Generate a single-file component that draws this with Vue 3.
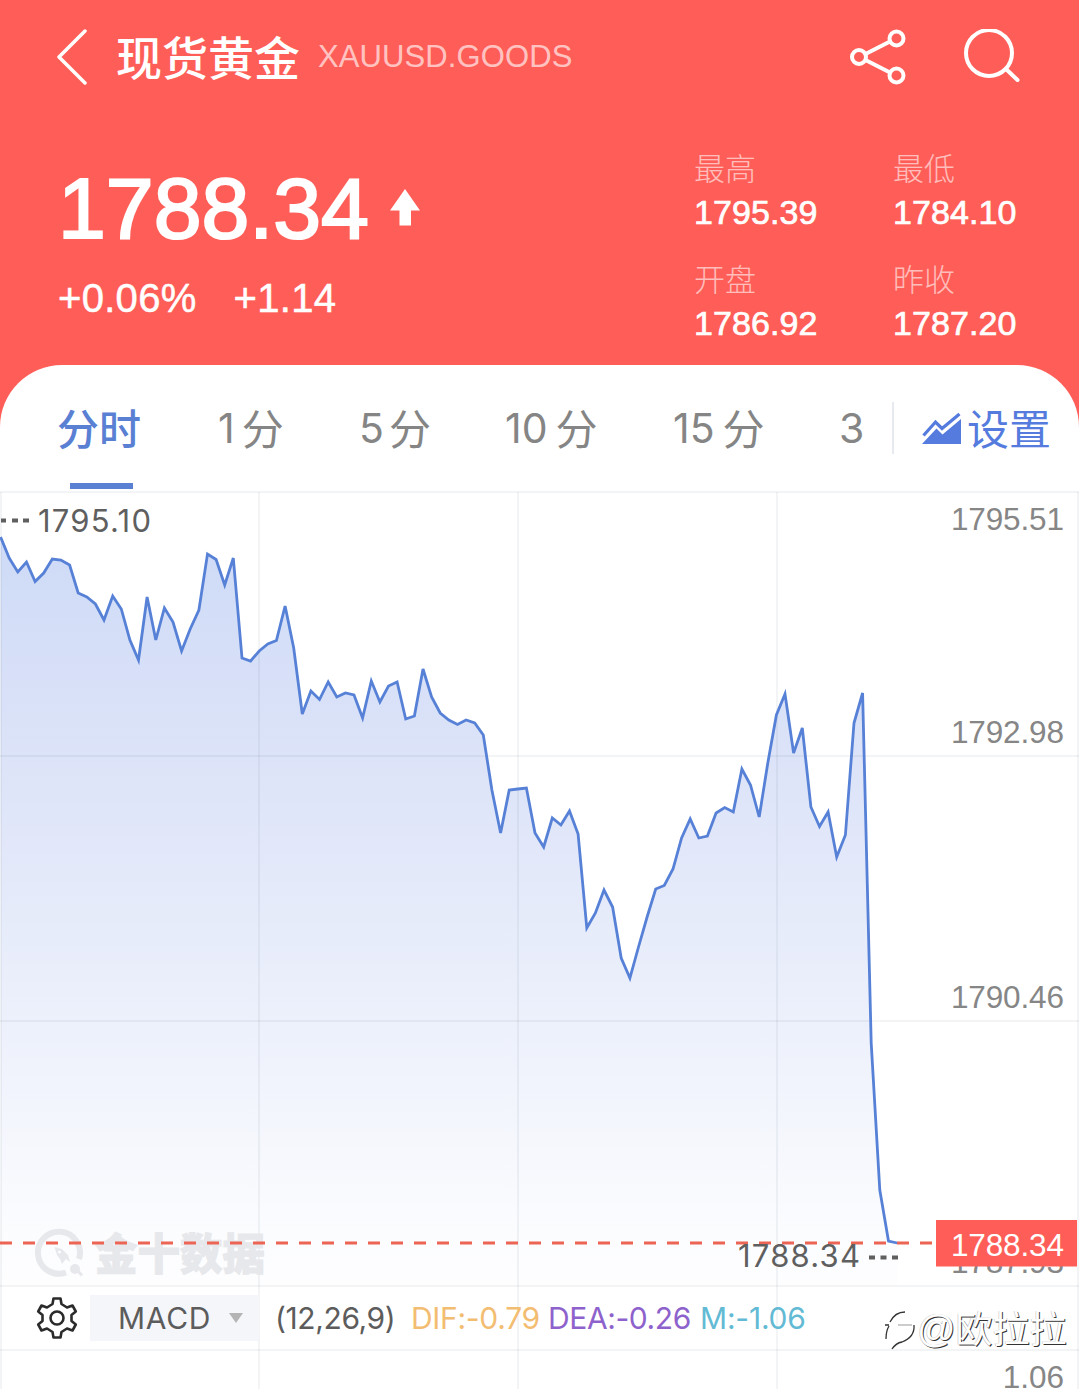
<script setup>
import { ref, computed } from 'vue';

const stats = [
  { label: '最高', value: '1795.39' },
  { label: '最低', value: '1784.10' },
  { label: '开盘', value: '1786.92' },
  { label: '昨收', value: '1787.20' },
];

const tabs = [
  { num: '', unit: '分时' },
  { num: '1', unit: '分' },
  { num: '5', unit: '分' },
  { num: '10', unit: '分' },
  { num: '15', unit: '分' },
  { num: '3', unit: '' },
];
const activeTab = ref(0);

// Y positions of the line inside the chart, one per minute
const serie = [
  46, 67, 81, 71, 90.5, 82, 68, 69, 74, 102, 106, 113, 129, 105, 118, 149, 169, 106, 149, 117,
  131, 160, 138, 119, 63, 68.5, 94, 67, 167, 170, 160, 153, 149.5, 115, 157, 223, 200, 208.5, 191, 206,
  202, 204, 227, 190, 211, 195, 191, 228, 225, 178, 206, 222, 229, 233.5, 229, 232, 244, 299, 342, 299,
  298, 297, 342, 356, 327, 334, 320, 343, 437, 422, 399, 416, 467, 487, 456, 426, 398, 394.5, 378, 347,
  328, 347, 345, 322, 316.5, 321, 278, 294, 326, 272, 224, 203, 262, 237, 316, 335.5, 321, 366, 344, 232,
  202, 552, 699, 750, 752,
];

const linePoints = computed(() =>
  serie.map((y, i) => `${(0.6 + i * 8.62).toFixed(1)},${y}`).join(' ')
);
const areaPoints = computed(() => `1,794 ${linePoints.value} 897.5,794`);

const axisLabels = [
  { y: 39, text: '1795.51', w: 113 },
  { y: 252, text: '1792.98', w: 113 },
  { y: 517, text: '1790.46', w: 113 },
  { y: 782, text: '1787.93', w: 113 },
];
</script>

<template>
  <main class="page">
    <header class="header">
      <div class="topbar">
        <svg class="back" width="30" height="56" viewBox="0 0 30 56">
          <path d="M28 2 L2 28 L28 54" />
        </svg>
        <h1>现货黄金</h1>
        <span class="code">XAUUSD.GOODS</span>
        <svg class="share" width="56" height="56" viewBox="0 0 56 56">
          <circle cx="9" cy="28" r="7" />
          <circle cx="46.500" cy="9.500" r="7" />
          <circle cx="46.500" cy="46.500" r="7" />
          <path d="M15.500 25 L40 12.500 M15.500 31 L40 43.500" />
        </svg>
        <svg class="search" width="58" height="56" viewBox="0 0 58 56">
          <circle cx="26" cy="24" r="23" />
          <path d="M43 40 L54.500 51" />
        </svg>
      </div>
      <div class="quote">
        <div class="price-box">
          <div class="price-row">
            <span class="price">1788.34</span>
            <svg width="30" height="38" viewBox="0 0 30 38">
              <path d="M15 0 L30 21.500 L21 21.500 L21 36.500 L9.500 36.500 L9.500 21.500 L0 21.500 Z" fill="#fff" />
            </svg>
          </div>
          <div class="change">
            <span>+0.06%</span>
            <span>+1.14</span>
          </div>
        </div>
        <div class="stats">
          <div v-for="s in stats" :key="s.label" class="stat">
            <span class="stat-label">{{ s.label }}</span>
            <span class="stat-value">{{ s.value }}</span>
          </div>
        </div>
      </div>
    </header>

    <section class="panel">
      <nav class="tabs">
        <button
          v-for="(t, i) in tabs"
          :key="i"
          class="tab"
          :class="['tab-' + i, { active: activeTab === i }]"
          @click="activeTab = i"
        >
          <span v-if="t.num" class="num">{{ t.num }}</span>
          <span v-if="t.unit" class="unit">{{ t.unit }}</span>
        </button>
        <span class="divider"></span>
        <button class="settings">
          <svg width="40" height="33" viewBox="0 0 40 33">
            <path d="M1.500 23.500 L13.500 10 L20 16.500 L37.500 2" fill="none" stroke="#547bdd" stroke-width="3.200" />
            <path d="M0 32 L14.500 16.500 L20.500 22.500 L39 7 L39 32 Z" fill="#547bdd" />
          </svg>
          <span class="unit">设置</span>
        </button>
      </nav>

      <div class="chart">
        <svg class="canvas" width="1079" height="898" viewBox="0 0 1079 898">
          <defs>
            <linearGradient id="fill" gradientUnits="userSpaceOnUse" x1="0" y1="46" x2="0" y2="794">
              <stop offset="0" stop-color="#4a78e0" stop-opacity="0.27" />
              <stop offset="0.32" stop-color="#4a6fdc" stop-opacity="0.185" />
              <stop offset="0.65" stop-color="#4a6fdc" stop-opacity="0.1" />
              <stop offset="0.93" stop-color="#4a6fdc" stop-opacity="0.02" />
              <stop offset="1" stop-color="#4a6fdc" stop-opacity="0.01" />
            </linearGradient>
          </defs>

          <polygon :points="areaPoints" fill="url(#fill)" />

          <g class="grid">
            <path d="M0 1 H1079 M0 265 H1079 M0 530 H1079 M0 795 H1079 M0 859 H1079" />
            <path d="M1 1 V898 M259 1 V898 M518 1 V898 M777 1 V898 M1078 1 V898" />
          </g>

          <g class="brand">
            <path d="M66 781.500 A21 21 0 1 1 79 768" fill="none" stroke-width="6" />
            <path d="M54.500 756 L62 758 L68 764 L70 771 L66 768 L62 773 L60 768 L57 764 Z" />
            <circle cx="59.500" cy="761" r="1.500" fill="#fff" />
            <circle cx="75" cy="778" r="5" />
            <path d="M77 779 L82 784.500" stroke-width="3" />
            <text x="95" y="779" textLength="170" lengthAdjust="spacingAndGlyphs">金十数据</text>
          </g>

          <path class="dash" d="M0 752 H932" />
          <polyline class="line" :points="linePoints" />

          <g class="marks">
            <path d="M1 29.500 H6 M12 29.500 H18 M23 29.500 H29" />
            <text x="38" y="40.500" textLength="113">1795.10</text>
            <text x="738" y="775.500" textLength="122">1788.34</text>
            <path d="M869 766.500 H875 M880.500 766.500 H886.500 M892 766.500 H898" />
          </g>

          <g class="axis">
            <text v-for="a in axisLabels" :key="a.text" x="1064" :y="a.y" :textLength="a.w">{{ a.text }}</text>
            <text x="1064" y="897">1.06</text>
          </g>
          <rect x="936" y="729" width="141" height="46.500" fill="#ff5e58" />
          <text class="tag" x="1064" y="764.500" textLength="113">1788.34</text>
        </svg>

        <div class="macd">
          <svg class="gear" width="42" height="42" viewBox="0 0 42 42">
            <path d="M17.500 1.500 H24.500 L25.500 7 L31 10.500 L36.500 8.500 L39.800 14.500 L35.500 18 V24 L39.800 27.500 L36.500 33.500 L31 31.500 L25.500 35 L24.500 40.500 H17.500 L16.500 35 L11 31.500 L5.500 33.500 L2.200 27.500 L6.500 24 V18 L2.200 14.500 L5.500 8.500 L11 10.500 L16.500 7 Z" />
            <circle cx="21" cy="21" r="6.500" />
          </svg>
          <button class="select">
            <span>MACD</span>
            <i class="caret"></i>
          </button>
          <span class="params">(12,26,9)</span>
          <span class="dif">DIF:-0.79</span>
          <span class="dea">DEA:-0.26</span>
          <span class="m">M:-1.06</span>
        </div>

        <div class="stamp">
          <svg width="34" height="42" viewBox="0 0 34 42">
            <g fill="none" stroke="#333" stroke-width="1.300">
              <path d="M2 17 H6 M7 14 Q12 4 22 4 M6 18 Q3 23 3 31" />
              <path d="M15 17 H29" stroke="#999" stroke-width="1" />
              <path d="M31 17 Q32 29 19 34 Q13 35 9 41" />
            </g>
          </svg>
          <span class="at">@</span><span>欧拉拉</span>
        </div>
      </div>
    </section>
  </main>
</template>

<style>
body {
  margin: 0;
  overflow: hidden;
}
</style>

<style scoped>
.page {
  width: 1079px;
  height: 1389px;
  overflow: hidden;
  background: #ff5e58;
  font-family: "Liberation Sans", "Noto Sans CJK SC", sans-serif;
  color: #fff;
}

button {
  padding: 0;
  border: none;
  background: none;
  font: inherit;
  color: inherit;
}

.header {
  height: 365px;
}

.topbar {
  display: flex;
  align-items: center;
  height: 114px;
  padding: 0 58px 0 57px;
}

.topbar svg {
  fill: none;
  stroke: #fff;
  stroke-width: 4;
  stroke-linecap: round;
  stroke-linejoin: round;
}

.topbar .back {
  stroke-width: 3.500;
}

h1 {
  margin: 0 0 0 29px;
  padding-top: 3px;
  font-size: 46px;
  line-height: 60px;
  font-weight: 500;
}

.code {
  margin-left: 18px;
  font-size: 31px;
  letter-spacing: 0.1px;
  color: rgba(255, 255, 255, 0.65);
}

.topbar .share {
  margin-left: auto;
}

.topbar .search {
  margin-left: 57px;
}

.quote {
  display: flex;
  justify-content: space-between;
  padding: 0 62px 0 58px;
}

.price-row {
  display: flex;
  align-items: center;
  gap: 21px;
  height: 96px;
  padding-top: 46px;
}

.price {
  font-size: 86px;
  line-height: 96px;
  -webkit-text-stroke: 2.2px #fff;
}

.change {
  display: flex;
  gap: 37px;
  margin-top: 19px;
  font-size: 40px;
  line-height: 46px;
  letter-spacing: 0.3px;
  -webkit-text-stroke: 0.5px #fff;
}

.stats {
  display: grid;
  grid-template-columns: 124px 124px;
  column-gap: 75px;
  row-gap: 23px;
  padding-top: 34px;
}

.stat {
  display: flex;
  flex-direction: column;
}

.stat-label {
  font-size: 31px;
  line-height: 44px;
  font-weight: 300;
  color: rgba(255, 255, 255, 0.6);
}

.stat-value {
  margin-top: -2px;
  font-size: 34px;
  line-height: 44px;
  letter-spacing: 0.1px;
  -webkit-text-stroke: 0.7px #fff;
}

.stat:nth-child(n + 3) {
  margin-top: 2px;
}

.panel {
  height: 1024px;
  background: #fff;
  border-radius: 62px 62px 0 0;
}

.tabs {
  display: flex;
  align-items: center;
  height: 126px;
  padding-left: 57px;
  box-sizing: border-box;
}

.tab {
  position: relative;
  display: flex;
  align-items: center;
  gap: 7px;
  height: 126px;
  font-size: 42px;
  color: #858585;
  white-space: nowrap;
}

.num {
  font-family: Inter, sans-serif;
  font-size: 41px;
}

.unit {
  padding-bottom: 4px;
}

.tab-0 { width: 161px; }
.tab-1 { width: 141px; }
.tab-2 { width: 146px; gap: 5px; }
.tab-3 { width: 168px; gap: 8px; }
.tab-4 { width: 166px; gap: 8px; }
.tab-5 { width: 53px; }

.tab.active {
  color: #5a80d4;
  font-weight: 500;
}

.tab.active::after {
  content: "";
  position: absolute;
  left: 13px;
  bottom: 2px;
  width: 63px;
  height: 6px;
  background: #5a80d4;
}

.divider {
  width: 2px;
  height: 52px;
  background: #e6eaf0;
}

.settings {
  display: flex;
  align-items: center;
  gap: 5px;
  margin-left: 28px;
  font-size: 42px;
  color: #547bdd;
}

.chart {
  position: relative;
  height: 898px;
  padding-top: 795px;
  box-sizing: border-box;
}

.canvas {
  position: absolute;
  left: 0;
  top: 0;
}

.grid path {
  fill: none;
  stroke: rgba(40, 60, 90, 0.06);
  stroke-width: 2;
}

.line {
  fill: none;
  stroke: #5681d6;
  stroke-width: 2.8;
}

.dash {
  stroke: #ec6453;
  stroke-width: 3;
  stroke-dasharray: 12 11;
}

.brand {
  fill: #e7e8eb;
  stroke: #e7e8eb;
  stroke-width: 0;
  font-family: "Noto Sans CJK SC", sans-serif;
  font-size: 43px;
  font-weight: 900;
}

.brand text {
  stroke-width: 1;
}

.marks {
  fill: #5f5f5f;
  font-family: Inter, sans-serif;
  font-size: 31px;
}

.marks path {
  stroke: #5f5f5f;
  stroke-width: 4;
}

.axis,
.tag {
  fill: #868686;
  font-size: 31.5px;
  text-anchor: end;
}

.tag {
  fill: #fff;
}

.macd {
  position: relative;
  display: flex;
  align-items: center;
  height: 64px;
  padding-left: 36px;
  font-family: Inter, sans-serif;
  font-size: 30px;
  white-space: nowrap;
}

.gear {
  fill: none;
  stroke: #2b2b2b;
  stroke-width: 2.6;
  stroke-linejoin: round;
}

.select {
  display: flex;
  align-items: center;
  gap: 18px;
  width: 169px;
  height: 46px;
  margin-left: 12px;
  padding-left: 28px;
  box-sizing: border-box;
  background: #f5f6fa;
  color: #5c5c5c;
  letter-spacing: 0.7px;
}

.caret {
  border: 7px solid transparent;
  border-top: 10px solid #b4b4b4;
  border-bottom: none;
}

.params {
  width: 136px;
  margin-left: 16px;
  color: #5c5c5c;
  letter-spacing: -0.4px;
}

.dif {
  width: 137px;
  color: #f3bd71;
  letter-spacing: -0.3px;
}

.dea {
  width: 152px;
  color: #8e62cc;
  letter-spacing: -0.4px;
}

.m {
  color: #62bad4;
  letter-spacing: -0.2px;
}

.stamp {
  position: absolute;
  left: 883px;
  top: 815px;
  display: flex;
  align-items: center;
  height: 46px;
  font-size: 37px;
  color: #fff;
  text-shadow: 1px 1px 0 #333, -0.5px -0.5px 0 #bbb;
  white-space: nowrap;
}

.stamp span:last-child {
  padding-bottom: 4px;
}

.at {
  font-size: 38px;
}
</style>
